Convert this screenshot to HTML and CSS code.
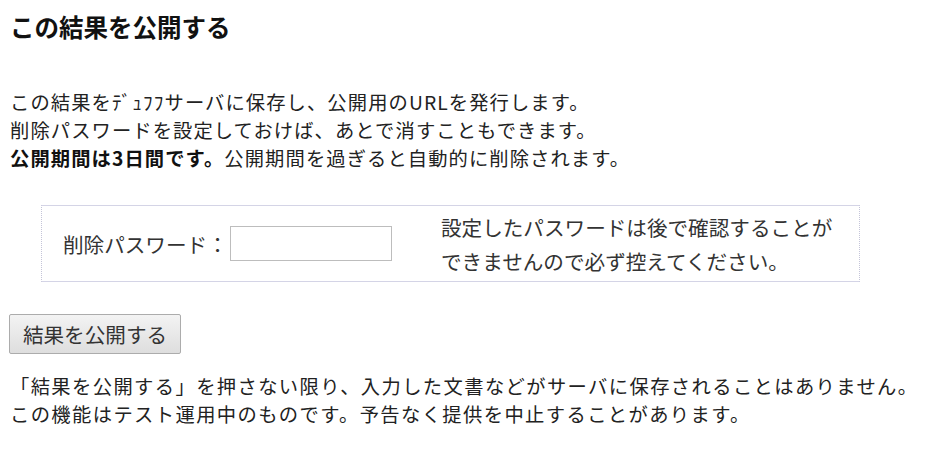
FILE: index.html
```html
<!DOCTYPE html>
<html lang="ja">
<head>
<meta charset="utf-8">
<title>この結果を公開する</title>
<link rel="stylesheet" href="styles.css">
</head>
<body>
<main class="page">
  <h1 class="title">この結果を公開する</h1>
  <p class="intro">この結果をﾃﾞｭﾌﾌサーバに保存し、公開用のURLを発行します。<br>削除パスワードを設定しておけば、あとで消すこともできます。<br><strong>公開期間は3日間です。</strong>公開期間を過ぎると自動的に削除されます。</p>
  <div class="panel">
    <div class="cell cell-left">
      <label class="pw-label" for="pw">削除パスワード：</label><input id="pw" class="pw-input" type="password">
    </div>
    <div class="cell cell-right">設定したパスワードは後で確認することが<br>できませんので必ず控えてください。</div>
  </div>
  <button class="publish" type="button">結果を公開する</button>
  <p class="note">「結果を公開する」を押さない限り、入力した文書などがサーバに保存されることはありません。<br>この機能はテスト運用中のものです。予告なく提供を中止することがあります。</p>
</main>
</body>
</html>
```
FILE: styles.css
```css
html, body {
  margin: 0;
  padding: 0;
  background: #ffffff;
}
body {
  font-family: "Noto Sans CJK JP", "Noto Sans", sans-serif;
  color: #222222;
  font-size: 19.3px;
}
.page {
  padding: 0 10px;
}
.title {
  margin: 0;
  padding-top: 9px;
  font-size: 24.5px;
  line-height: 36px;
  font-weight: bold;
  color: #111111;
}
.intro {
  margin: 43px 0 0;
  line-height: 28px;
  letter-spacing: 1.1px;
}
.intro strong {
  font-weight: bold;
  color: #111111;
}
.panel {
  display: flex;
  margin: 33px 0 0 31px;
  width: 819px;
  height: 77px;
  box-sizing: border-box;
  border-top: 1px solid #d4d4e6;
  border-bottom: 1px solid #d4d4e6;
  border-left: 1px dotted #c4c4d8;
  border-right: 1px dotted #c4c4d8;
}
.cell {
  display: flex;
  align-items: center;
}
.cell-left {
  width: 375px;
  padding-left: 21px;
  box-sizing: border-box;
}
.pw-label {
  font-size: 20.6px;
  color: #333333;
}
.pw-input {
  margin-left: 2px;
  width: 162px;
  height: 35px;
  box-sizing: border-box;
  border: 1px solid #bdbdbd;
  padding: 0;
  font-size: 16px;
  background: #ffffff;
}
.cell-right {
  padding-left: 24px;
  font-size: 20.6px;
  line-height: 34px;
  color: #333333;
}
.publish {
  display: block;
  margin: 32px 0 0 -1px;
  width: 172px;
  height: 40px;
  padding: 0 8px;
  font-family: inherit;
  font-size: 20.6px;
  color: #333333;
  border: 1px solid #acacac;
  border-radius: 2px;
  background: linear-gradient(#f3f3f3, #dedede);
}
.note {
  margin: 18px 0 0;
  line-height: 28px;
  letter-spacing: 1.4px;
}
```
